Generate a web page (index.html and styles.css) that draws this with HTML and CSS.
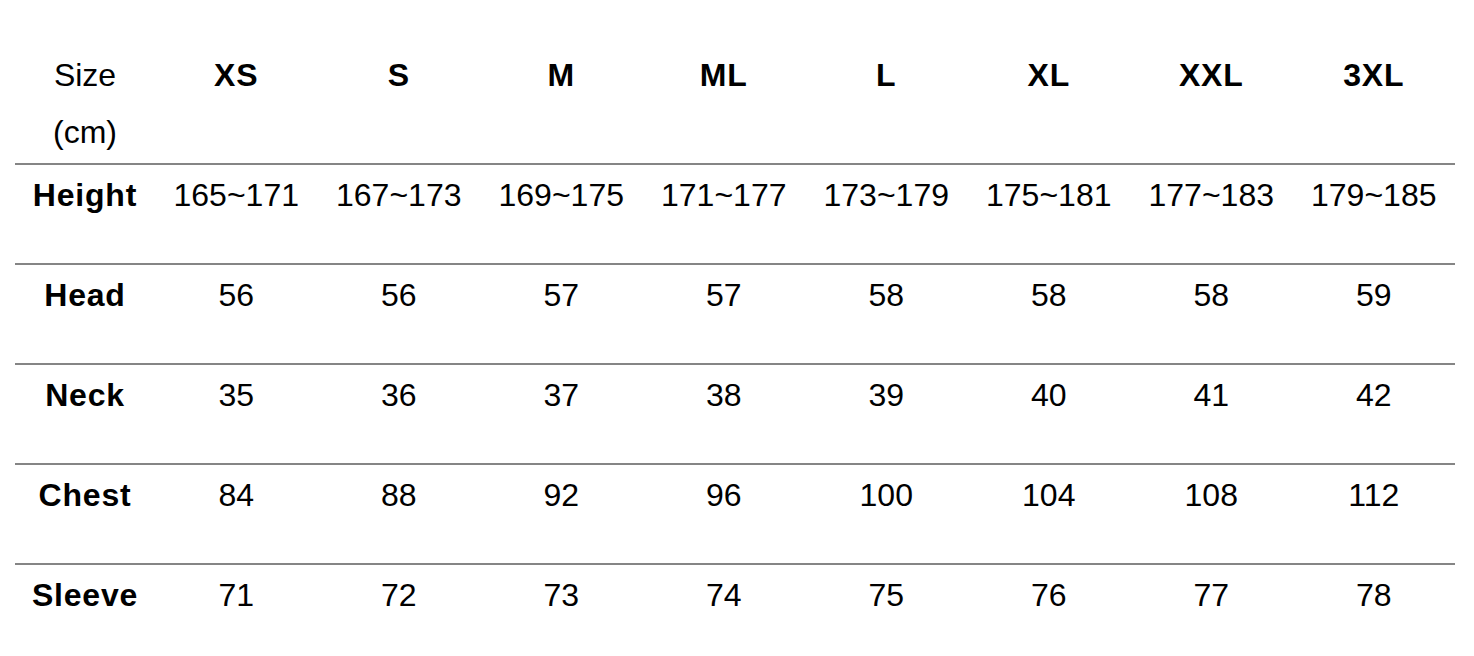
FILE: index.html
```html
<!DOCTYPE html>
<html>
<head>
<meta charset="utf-8">
<link rel="stylesheet" href="styles.css">
</head>
<body>
<div class="chart">
  <div class="row head">
    <div class="cell">Size<br>(cm)</div>
    <div class="cell b">XS</div>
    <div class="cell b">S</div>
    <div class="cell b">M</div>
    <div class="cell b">ML</div>
    <div class="cell b">L</div>
    <div class="cell b">XL</div>
    <div class="cell b">XXL</div>
    <div class="cell b">3XL</div>
  </div>
  <div class="row">
    <div class="cell b">Height</div>
    <div class="cell">165~171</div>
    <div class="cell">167~173</div>
    <div class="cell">169~175</div>
    <div class="cell">171~177</div>
    <div class="cell">173~179</div>
    <div class="cell">175~181</div>
    <div class="cell">177~183</div>
    <div class="cell">179~185</div>
  </div>
  <div class="row">
    <div class="cell b">Head</div>
    <div class="cell">56</div>
    <div class="cell">56</div>
    <div class="cell">57</div>
    <div class="cell">57</div>
    <div class="cell">58</div>
    <div class="cell">58</div>
    <div class="cell">58</div>
    <div class="cell">59</div>
  </div>
  <div class="row">
    <div class="cell b">Neck</div>
    <div class="cell">35</div>
    <div class="cell">36</div>
    <div class="cell">37</div>
    <div class="cell">38</div>
    <div class="cell">39</div>
    <div class="cell">40</div>
    <div class="cell">41</div>
    <div class="cell">42</div>
  </div>
  <div class="row">
    <div class="cell b">Chest</div>
    <div class="cell">84</div>
    <div class="cell">88</div>
    <div class="cell">92</div>
    <div class="cell">96</div>
    <div class="cell">100</div>
    <div class="cell">104</div>
    <div class="cell">108</div>
    <div class="cell">112</div>
  </div>
  <div class="row last">
    <div class="cell b">Sleeve</div>
    <div class="cell">71</div>
    <div class="cell">72</div>
    <div class="cell">73</div>
    <div class="cell">74</div>
    <div class="cell">75</div>
    <div class="cell">76</div>
    <div class="cell">77</div>
    <div class="cell">78</div>
  </div>
</div>
</body>
</html>
```

FILE: styles.css
```css
html, body {
  margin: 0;
  padding: 0;
  background: #fff;
}
body {
  font-family: "Liberation Sans", Arial, sans-serif;
  font-size: 32px;
  color: #000;
}
.chart {
  width: 1440px;
  margin: 45px 0 0 15px;
}
.row {
  display: grid;
  grid-template-columns: 140px repeat(8, 1fr);
  height: 98px;
  border-bottom: 2px solid #858585;
}
.row.head {
  height: 118px;
}
.row.last {
  border-bottom: none;
}
.cell {
  text-align: center;
  line-height: 57px;
  padding-top: 2px;
  white-space: nowrap;
}
.b {
  font-weight: bold;
  letter-spacing: 0.8px;
}
```
